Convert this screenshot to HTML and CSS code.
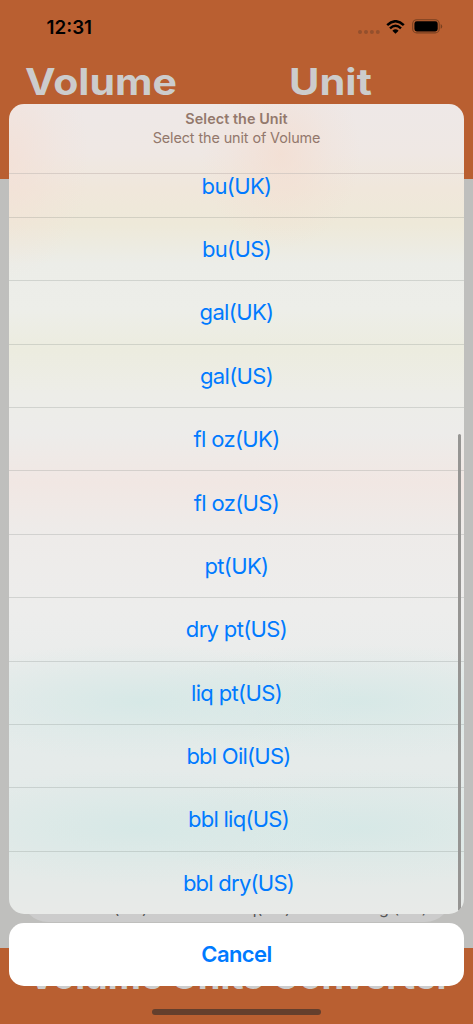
FILE: index.html
```html
<!DOCTYPE html>
<html lang="en">
<head>
<meta charset="utf-8">
<meta name="viewport" content="width=device-width, initial-scale=1">
<title>Volume Units Converter</title>
<link rel="stylesheet" href="styles.css">
</head>
<body>
<div class="screen">
  <div class="app">
    <header class="app-header">
      <div class="status-bar">
        <span class="time">12:31</span>
        <div class="status-icons">
          <svg class="dots" width="22" height="4" viewBox="0 0 22 4"><circle cx="2" cy="2" r="2"/><circle cx="8" cy="2" r="2"/><circle cx="13.9" cy="2" r="2"/><circle cx="19.8" cy="2" r="2"/></svg>
          <svg class="wifi" width="19" height="14" viewBox="0 0 19 14"><path d="M1.2 5.2Q9.5 -2.7 17.8 5.2" fill="none" stroke="#000" stroke-width="2.5"/><path d="M4 8.3Q9.5 3.2 15 8.3" fill="none" stroke="#000" stroke-width="2.4"/><path d="M6.4 10.8Q9.5 7.9 12.6 10.8L9.5 13.8Z"/></svg>
          <svg class="battery" width="31" height="15" viewBox="0 0 31 15"><rect x=".7" y=".7" width="26.5" height="13.2" rx="4" fill="none" stroke="#784020" stroke-width="1.1"/><rect x="2.4" y="2.3" width="23.3" height="10.1" rx="2.4"/><path d="M28.7 5v4.8q1.5-.6 1.5-2.4T28.7 5Z" fill="#784020"/></svg>
        </div>
      </div>
      <div class="headings"><h1 class="heading-volume">Volume</h1><h1 class="heading-unit">Unit</h1></div>
    </header>
    <main class="content">
      <div class="unit-card"><span>bu(UK)</span><span>bbl liq(UK)</span><span>kg (UK)</span></div>
    </main>
    <footer class="app-footer"><h2>Volume Units Converter</h2></footer>
  </div>
  <div class="overlay">
    <section class="sheet">
      <div class="sheet-header"><strong>Select the Unit</strong><span>Select the unit of Volume</span></div>
      <div class="options">
        <div class="option first"><span>bu(UK)</span></div>
        <div class="option"><span>bu(US)</span></div>
        <div class="option"><span>gal(UK)</span></div>
        <div class="option"><span>gal(US)</span></div>
        <div class="option"><span>fl oz(UK)</span></div>
        <div class="option"><span>fl oz(US)</span></div>
        <div class="option"><span>pt(UK)</span></div>
        <div class="option"><span>dry pt(US)</span></div>
        <div class="option"><span>liq pt(US)</span></div>
        <div class="option barrel"><span>bbl Oil(US)</span></div>
        <div class="option barrel"><span>bbl liq(US)</span></div>
        <div class="option barrel"><span>bbl dry(US)</span></div>
      </div>
      <i class="scrollbar"></i>
    </section>
    <button class="cancel">Cancel</button>
  </div>
  <i class="home-indicator"></i>
</div>
</body>
</html>
```
FILE: styles.css
```css
* { box-sizing: border-box; }
body { margin: 0; font-family: Inter, "Liberation Sans", sans-serif; }
h1, h2 { margin: 0; }
.screen { position: relative; width: 473px; height: 1024px; overflow: hidden; }
.app { display: flex; flex-direction: column; height: 100%; background: #bfbfbd; }
.app-header { height: 179px; background: #b95f31; }
.status-bar { display: flex; justify-content: space-between; height: 54px; padding: 17px 30px 0 46.5px; }
.time { font-size: 18.8px; line-height: 21px; font-weight: 600; letter-spacing: 0; }
.status-icons { display: flex; align-items: flex-start; }
.dots { margin: 13px 6px 0 0; fill: #94502d; }
.wifi { margin: 3px 7px 0 0; }
.battery { margin-top: 2px; }
.headings { display: flex; color: #ccc; padding-left: 25px; }
.headings h1 { font-size: 36.5px; line-height: 57px; font-weight: 700; transform-origin: left; white-space: nowrap; }
.heading-volume { width: 264px; transform: scaleX(1.125); }
.heading-unit { transform: scaleX(1.14); }
.content { flex: 1; display: flex; align-items: flex-end; padding: 0 22px 26px; }
.unit-card { display: grid; grid-template-columns: 156px 104px 1fr; align-items: end; width: 100%; height: 80px; padding: 0 0 4px 21px; border-radius: 26px; background: #ccc; color: #555; font-size: 16px; line-height: 20px; text-align: center; }
.unit-card span:nth-child(3) { padding-left: 44px; }
.app-footer { height: 76px; background: #b95f31; color: #ccc; padding: 6px 0 0 28px; }
.app-footer h2 { width: max-content; font-size: 36px; line-height: 44px; font-weight: 700; white-space: nowrap; transform: scaleX(1.01); transform-origin: left; }
.overlay { position: absolute; inset: 104px 9px 38px; display: flex; flex-direction: column; gap: 9px; }
.sheet { position: relative; display: flex; flex-direction: column; height: 810px; border-radius: 15px; overflow: hidden; background:
  radial-gradient(ellipse 80px 95px at 272px 50px, rgba(244,221,208,.75) 0%, rgba(244,221,208,.2) 65%, transparent 100%),
  radial-gradient(ellipse 80px 120px at 0 55px, rgba(244,223,213,.75) 0%, rgba(244,223,213,.2) 65%, transparent 100%),
  radial-gradient(ellipse 230px 58px at 130px 598px, rgba(213,232,230,.9) 0%, rgba(213,232,230,.35) 60%, transparent 100%),
  radial-gradient(ellipse 230px 58px at 350px 598px, rgba(213,232,230,.9) 0%, rgba(213,232,230,.35) 60%, transparent 100%),
  radial-gradient(ellipse 230px 58px at 130px 724px, rgba(213,232,230,.9) 0%, rgba(213,232,230,.35) 60%, transparent 100%),
  radial-gradient(ellipse 230px 58px at 350px 724px, rgba(213,232,230,.9) 0%, rgba(213,232,230,.35) 60%, transparent 100%),
  linear-gradient(#eee8e7 0, #efe8e4 50px, #f0e7db 85px, #eee9d9 120px, #ecede8 160px, #edeee9 205px, #ececdf 245px, #edede8 290px, #edecea 330px, #f1e7e3 378px, #eeebe9 425px, #ededec 505px, #e5ebea 650px, #e5eae8 775px, #e8eae8 810px); }
.sheet-header { display: flex; flex-direction: column; align-items: center; flex: 0 0 69.5px; padding-top: 5px; border-bottom: 1px solid #d8cdc6; color: #93786c; font-size: 14.4px; line-height: 19px; letter-spacing: -.1px; }
.sheet-header strong { font-weight: 600; letter-spacing: .05px; }
.options { flex: 1; display: flex; flex-direction: column; overflow: hidden; }
.option { flex: 0 0 63.38px; display: flex; align-items: center; justify-content: center; border-top: 1px solid rgba(90,100,95,.19); color: #007aff; font-size: 22px; line-height: 28px; letter-spacing: -.65px; white-space: nowrap; }
.option.first { flex-basis: 43.4px; align-items: flex-start; border-top: 0; line-height: 24px; }
.option.barrel { padding-left: 4px; letter-spacing: -.75px; }
.scrollbar { position: absolute; top: 330px; right: 3px; bottom: 3px; width: 3.5px; border-radius: 2px; background: #969593; }
.cancel { height: 63px; padding: 0; border: 0; border-radius: 15px; background: #fff; color: #007aff; font: 600 22px/63px Inter, "Liberation Sans", sans-serif; letter-spacing: -.6px; }
.home-indicator { position: absolute; left: 152px; bottom: 9px; width: 169px; height: 6px; border-radius: 3px; background: #643f2d; }
```
